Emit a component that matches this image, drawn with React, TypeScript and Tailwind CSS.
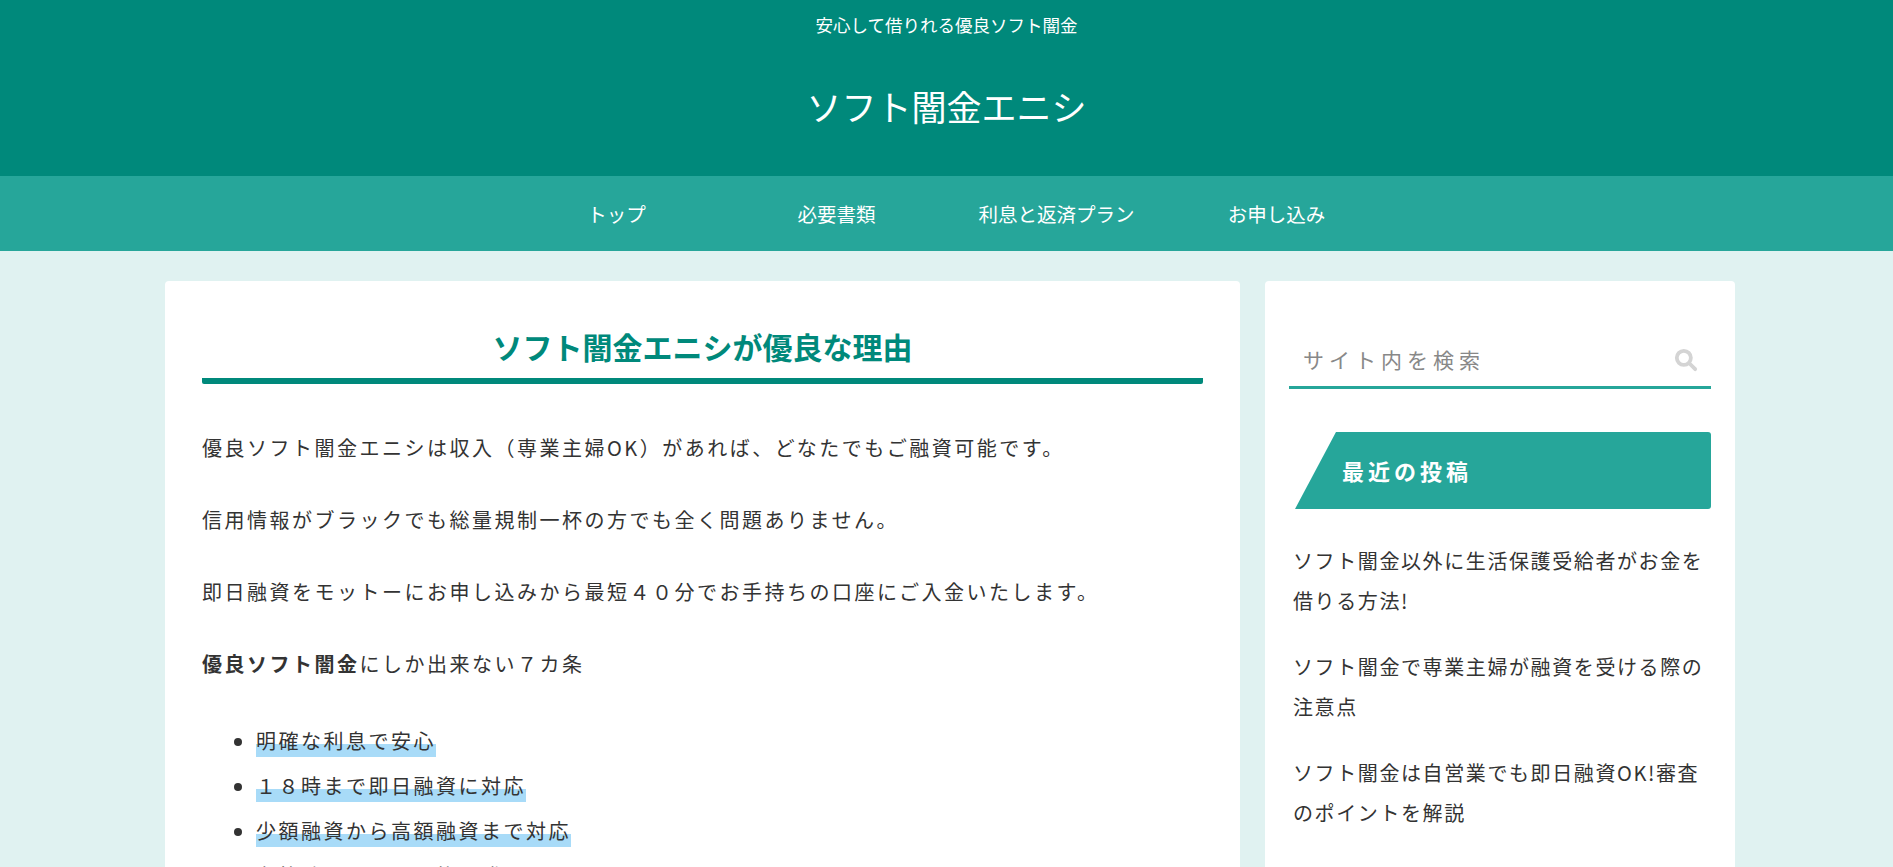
import React from "react";

const font = { fontFamily: '"Noto Sans CJK JP", "Noto Sans", sans-serif' };

export default function App() {
  return (
    <div style={font} className="min-h-screen bg-[#e0f2f1] text-[#333]">
      <header className="bg-[#00897b] text-white h-[176px] flex flex-col items-center">
        <div className="text-[17.5px] mt-[13px] leading-[24px]">安心して借りれる優良ソフト闇金</div>
        <div className="text-[35px] mt-[44px] leading-[50px]">ソフト闇金エニシ</div>
      </header>
      <nav className="bg-[#26a69a] h-[75px] flex justify-center items-center text-white text-[19.5px]">
        {["トップ", "必要書類", "利息と返済プラン", "お申し込み"].map((t) => (
          <div key={t} className="w-[220px] text-center">{t}</div>
        ))}
      </nav>
      <div className="w-[1570px] ml-[165px] pt-[30px] flex gap-[25px] items-start">
        <main className="w-[1075px] bg-white rounded-[4px] px-[37px] pt-[45px] pb-[20px] h-[600px] overflow-hidden">
          <h1 className="text-[30px] font-bold text-[#00897b] text-center leading-[40px] pb-[12px] border-b-[6px] border-[#00897b] rounded-b-[2px]">
            ソフト闇金エニシが優良な理由
          </h1>
          <div className="text-[20px] leading-[36px] tracking-[2.5px]">
            <p className="mt-[46px]">優良ソフト闇金エニシは収入（専業主婦OK）があれば、どなたでもご融資可能です。</p>
            <p className="mt-[36px]">信用情報がブラックでも総量規制一杯の方でも全く問題ありません。</p>
            <p className="mt-[36px]">即日融資をモットーにお申し込みから最短４０分でお手持ちの口座にご入金いたします。</p>
            <p className="mt-[36px]"><b>優良ソフト闇金</b>にしか出来ない７カ条</p>
            <ul className="mt-[36px] list-disc pl-[54px] leading-[45px] marker:text-[#333]">
              {["明確な利息で安心", "１８時まで即日融資に対応", "少額融資から高額融資まで対応", "在籍確認なしも可能で誰にもバレない"].map((t) => (
                <li key={t}>
                  <span className="bg-[linear-gradient(transparent_58%,#a8dbf8_58%)] pb-[2px]">{t}</span>
                </li>
              ))}
            </ul>
          </div>
        </main>
        <aside className="w-[470px] bg-white rounded-[4px] px-[24px] pt-[52px] h-[600px] overflow-hidden">
          <div className="flex items-center border-b-[3px] border-[#26a69a] h-[56px] pl-[14px] pr-[12px]">
            <span className="flex-1 text-[21px] tracking-[5px] text-[#888]">サイト内を検索</span>
            <svg width="26" height="26" viewBox="0 0 24 24" fill="none" stroke="#d4d4d4" strokeWidth="3.5" strokeLinecap="round">
              <circle cx="10" cy="10" r="6.5" />
              <path d="M15 15l5.5 5.5" />
            </svg>
          </div>
          <div className="mt-[43px] ml-[6px] h-[77px] bg-[#26a69a] rounded-r-[3px] flex items-center pl-[47px] text-white font-bold text-[22px] tracking-[4px] [clip-path:polygon(41px_0,100%_0,100%_100%,0_100%)]">
            最近の投稿
          </div>
          <div className="mt-[32px] pl-[4px] pr-[6px] text-[20px] tracking-[1.6px] leading-[40px] flex flex-col gap-[26px]">
            <div>ソフト闇金以外に生活保護受給者がお金を借りる方法!</div>
            <div>ソフト闇金で専業主婦が融資を受ける際の注意点</div>
            <div>ソフト闇金は自営業でも即日融資OK!審査のポイントを解説</div>
          </div>
        </aside>
      </div>
    </div>
  );
}
